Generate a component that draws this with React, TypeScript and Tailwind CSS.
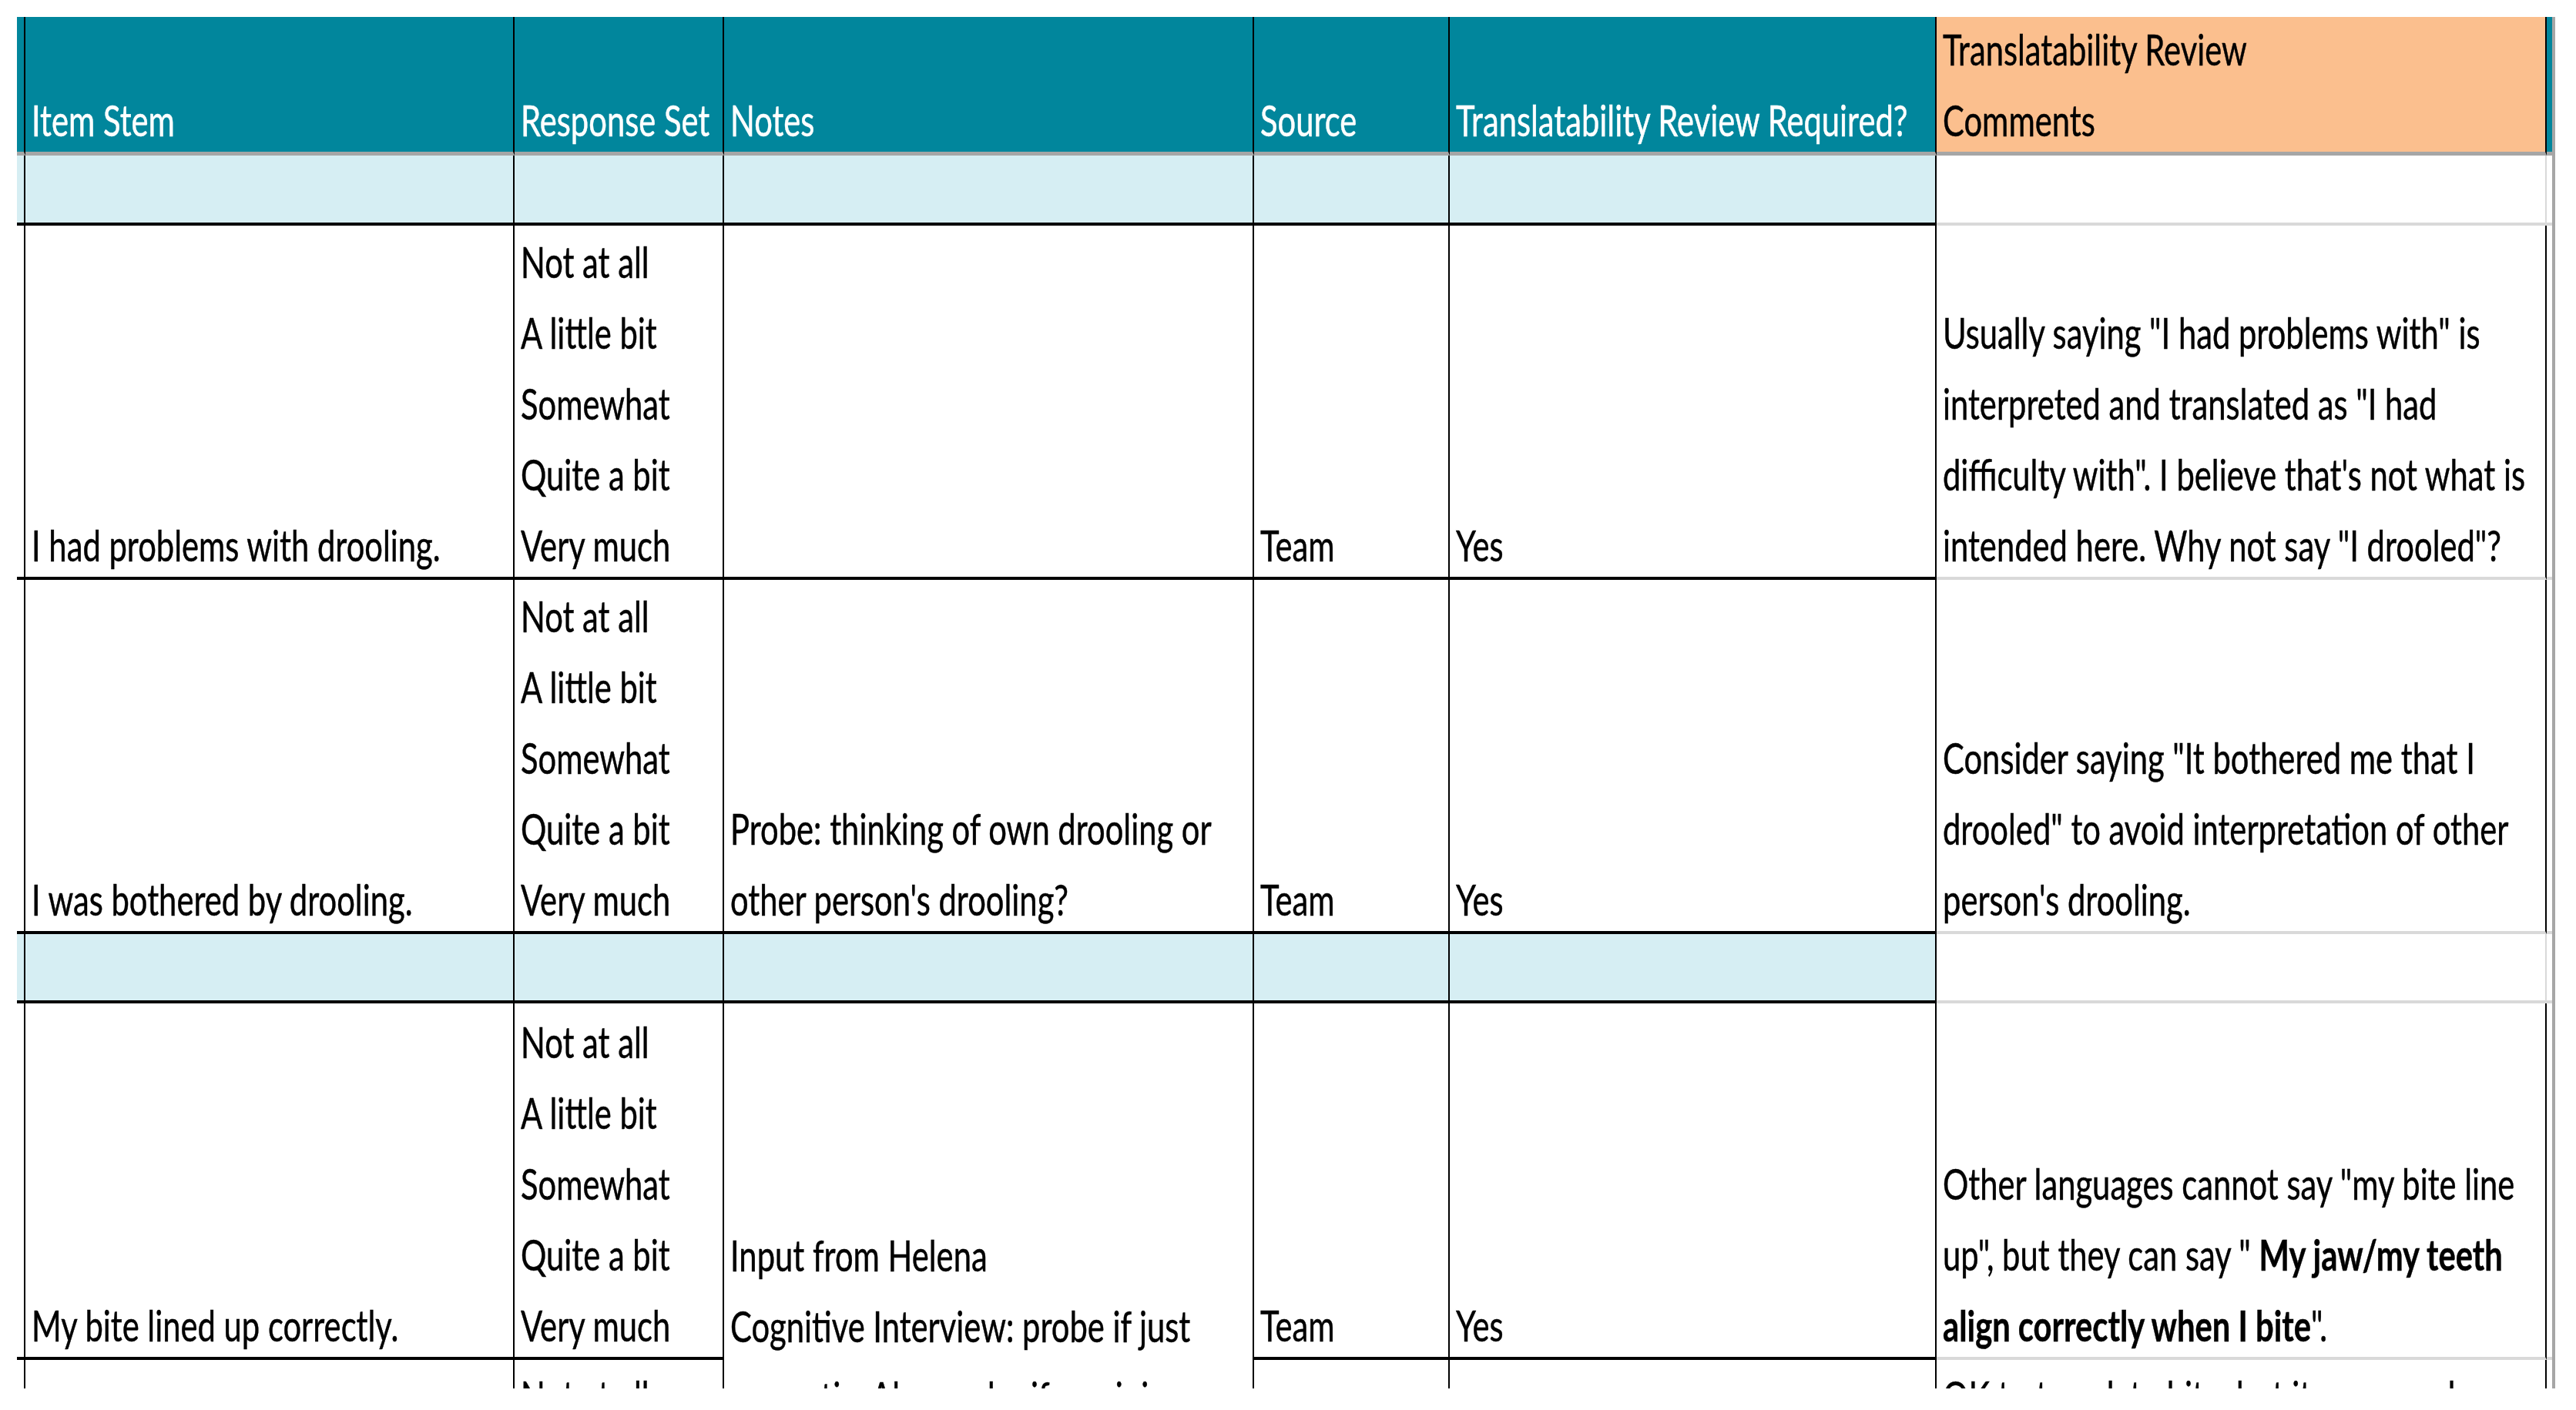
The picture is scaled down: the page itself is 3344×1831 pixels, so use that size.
import type { ReactNode } from "react";

const CELL: Record<string, string> = {
  head: "bg-[#01869c] text-white border-r-2 border-r-black border-b-[5px] border-b-[#a6a6a6]",
  headOrange: "bg-[#fbbf8e] text-black border-r-2 border-r-black border-b-[5px] border-b-[#a6a6a6]",
  headEdge: "bg-[#01869c] border-b-[5px] border-b-[#a6a6a6]",
  band: "bg-[#d6eef3] border-r-2 border-r-black border-b-4 border-b-black",
  bandComment: "bg-white border-r-2 border-r-[#d9d9d9] border-b-4 border-b-[#d9d9d9]",
  edge: "bg-white border-b-4 border-b-[#d9d9d9]",
  body: "bg-white text-black border-r-2 border-r-black border-b-4 border-b-black",
  bodyComment: "bg-white text-black border-r-2 border-r-black border-b-4 border-b-[#d9d9d9]",
};

const scale = ["Not at all", "A little bit", "Somewhat", "Quite a bit", "Very much"];

function Cell({
  kind,
  lines = [],
  top,
  className = "",
}: {
  kind: string;
  lines?: ReactNode[];
  top?: boolean;
  className?: string;
}) {
  return (
    <div className={`${CELL[kind]} flex flex-col ${top ? "justify-start" : "justify-end"} pl-[8px] overflow-visible ${className}`}>
      <div className={top ? "" : "-mb-[5px]"}>
        {lines.map((l, i) => (
          <div key={i} className="h-[92px] leading-[92px] whitespace-nowrap">
            <span className="inline-block origin-left scale-x-[0.745] [-webkit-text-stroke:0.5px_currentColor]">{l}</span>
          </div>
        ))}
      </div>
    </div>
  );
}

function Band() {
  return (
    <>
      {Array.from({ length: 6 }).map((_, i) => (
        <Cell key={i} kind="band" />
      ))}
      <Cell kind="bandComment" />
      <Cell kind="edge" />
    </>
  );
}

export default function App() {
  return (
    <div className="w-[3344px] h-[1831px] bg-white pt-[22px] pl-[22px]" style={{ fontFamily: "Lato, 'Open Sans', sans-serif" }}>
      <div className="w-[3295px] h-[1781px] overflow-hidden border-r-4 border-r-[#a6a6a6]">
        <div className="grid grid-cols-[11px_635px_272px_688px_254px_632px_792px_7px] grid-rows-[180px_91px_460px_460px_90px_463px_460px] text-[56px]">
          {/* header */}
          <Cell kind="head" />
          <Cell kind="head" lines={["Item Stem"]} />
          <Cell kind="head" lines={["Response Set"]} />
          <Cell kind="head" lines={["Notes"]} />
          <Cell kind="head" lines={["Source"]} />
          <Cell kind="head" lines={["Translatability Review Required?"]} />
          <Cell kind="headOrange" lines={["Translatability Review", "Comments"]} />
          <Cell kind="headEdge" />

          <Band />

          {/* drooling problems */}
          <Cell kind="body" />
          <Cell kind="body" lines={["I had problems with drooling."]} />
          <Cell kind="body" lines={scale} />
          <Cell kind="body" />
          <Cell kind="body" lines={["Team"]} />
          <Cell kind="body" lines={["Yes"]} />
          <Cell
            kind="bodyComment"
            lines={[
              'Usually saying "I had problems with" is',
              'interpreted and translated as "I had',
              'difficulty with". I believe that\'s not what is',
              'intended here. Why not say "I drooled"?',
            ]}
          />
          <Cell kind="edge" />

          {/* bothered by drooling */}
          <Cell kind="body" />
          <Cell kind="body" lines={["I was bothered by drooling."]} />
          <Cell kind="body" lines={scale} />
          <Cell kind="body" lines={["Probe: thinking of own drooling or", "other person's drooling?"]} />
          <Cell kind="body" lines={["Team"]} />
          <Cell kind="body" lines={["Yes"]} />
          <Cell
            kind="bodyComment"
            lines={[
              'Consider saying "It bothered me that I',
              'drooled" to avoid interpretation of other',
              "person's drooling.",
            ]}
          />
          <Cell kind="edge" />

          <Band />

          {/* bite */}
          <Cell kind="body" />
          <Cell kind="body" lines={["My bite lined up correctly."]} />
          <Cell kind="body" lines={scale} />
          <Cell
            kind="body"
            top
            className="row-span-2 pt-[281px]"
            lines={[
              "Input from Helena",
              "Cognitive Interview: probe if just",
              "cosmetic. Also probe if pre-injury",
              "status is relevant.",
            ]}
          />
          <Cell kind="body" lines={["Team"]} />
          <Cell kind="body" lines={["Yes"]} />
          <Cell
            kind="bodyComment"
            lines={[
              'Other languages cannot say "my bite line',
              <>up", but they can say " <b>My jaw/my teeth</b></>,
              <><b>align correctly when I bite</b>".</>,
            ]}
          />
          <Cell kind="edge" />

          {/* next item, cut off */}
          <Cell kind="body" />
          <Cell kind="body" lines={["My teeth fit together."]} />
          <Cell kind="body" lines={scale} />
          <Cell kind="body" lines={["Team"]} />
          <Cell kind="body" lines={["Yes"]} />
          <Cell
            kind="bodyComment"
            lines={[
              "OK to translate bite, but it may need a",
              "little more context so the item is clear",
              "in languages where this wording is",
              "unusual for patients.",
              "",
            ]}
          />
          <Cell kind="edge" />
        </div>
      </div>
    </div>
  );
}
